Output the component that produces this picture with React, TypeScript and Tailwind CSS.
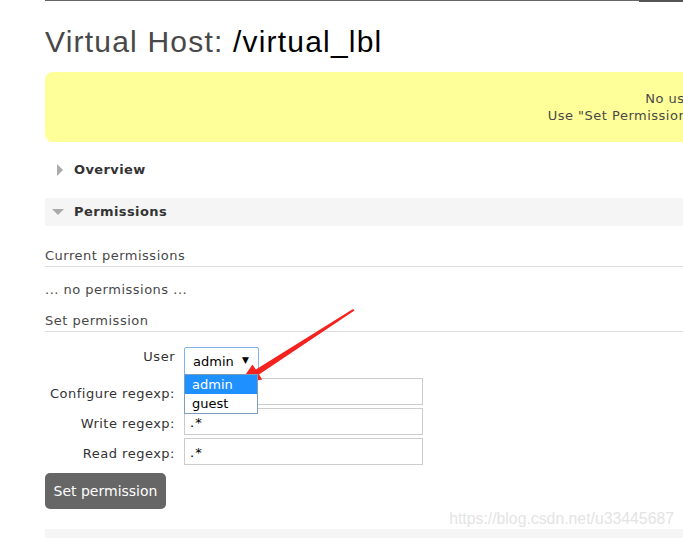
import React from "react";

const BODY = { fontFamily: '"DejaVu Sans", Verdana, sans-serif' };

function Field({ label, value }: { label: string; value: string }) {
  return (
    <>
      <div className="flex h-[27px] items-center justify-end pt-[4px] text-[13px] tracking-[0.5px] text-[#333]">{label}</div>
      <div className="h-[27px] w-[239px] border border-[#ccc] bg-white px-[5px] pt-[2px] text-[13px] leading-[23px] tracking-[1px] text-black">
        {value}
      </div>
    </>
  );
}

export default function App() {
  return (
    <div className="relative h-[538px] w-[683px] overflow-hidden bg-white" style={BODY}>
      {/* top rule */}
      <div className="flex h-[2px]">
        <div className="ml-[45px] h-px w-[594px] bg-[#666]" />
        <div className="h-[2px] flex-1 bg-[#555]" />
      </div>

      <div className="pl-[45px]">
        <h1
          className="mt-[21px] h-[38px] whitespace-nowrap text-[30px] leading-[38px] tracking-[1.2px] text-[#484848]"
          style={{ fontFamily: '"Liberation Sans", Arial, sans-serif' }}
        >
          Virtual Host: <span className="text-black">/virtual_lbl</span>
        </h1>

        {/* warning box */}
        <div className="mt-[11px] w-[1570px] rounded-[8px] bg-[#ffff99] py-[18px] text-center text-[13px] leading-[17px] tracking-[0.5px] text-[#484848]">
          <p>No users have permission to access this virtual host.</p>
          <p>Use "Set Permission" below to grant users permission to access this virtual host.</p>
        </div>

        {/* overview (collapsed) */}
        <div className="mt-[14px] flex h-[28px] items-center gap-[11px] pl-[12px]">
          <div className="h-0 w-0 border-y-[6px] border-l-[6px] border-y-transparent border-l-[#aaa]" />
          <span className="text-[13px] font-bold tracking-[0.4px] text-[#333]">Overview</span>
        </div>

        {/* permissions (expanded) */}
        <div className="mt-[14px] flex h-[28px] items-center gap-[10px] bg-[#f5f5f5] pl-[7px]">
          <div className="h-0 w-0 border-x-[6px] border-t-[6px] border-x-transparent border-t-[#aaa]" />
          <span className="text-[13px] font-bold tracking-[0.4px] text-[#333]">Permissions</span>
        </div>

        <h3 className="mt-[21px] border-b border-[#ddd] pb-[2px] text-[13px] leading-[17px] tracking-[0.5px] text-[#484848]">
          Current permissions
        </h3>
        <p className="mt-[14px] text-[13px] leading-[17px] tracking-[0.5px] text-[#484848]">... no permissions ...</p>

        <h3 className="mt-[14px] border-b border-[#ddd] pb-[2px] text-[13px] leading-[17px] tracking-[0.5px] text-[#484848]">
          Set permission
        </h3>

        <div className="mt-[15px] grid grid-cols-[130px_auto] gap-x-[9px] gap-y-[3px]">
          <div className="pt-[1px] text-right text-[13px] leading-[17px] tracking-[0.5px] text-[#333]">User</div>
          <div className="relative h-[28px] w-[75px]">
            <div className="flex h-[28px] w-[75px] items-center justify-between rounded-[2px] border border-[#7eb4ea] bg-white pl-[8px] pr-[9px] text-[13px] text-black">
              <span className="pt-[2px]">admin</span>
              <span className="text-[9px]">▼</span>
            </div>
            {/* open dropdown */}
            <div className="absolute left-0 top-[27px] z-10 w-[74px] border border-[#7f9db9] bg-white text-[13px] leading-[19px]">
              <div className="bg-[#1e90ff] pl-[7px] text-white">admin</div>
              <div className="pl-[7px] text-black">guest</div>
            </div>
          </div>
          <Field label="Configure regexp:" value="" />
          <Field label="Write regexp:" value=".*" />
          <Field label="Read regexp:" value=".*" />
        </div>

        <button className="mt-[8px] h-[36px] w-[121px] rounded-[5px] bg-[#666] text-[14px] text-white">
          Set permission
        </button>

        <div className="mt-[20px] h-[20px] bg-[#f5f5f5]" />
      </div>

      {/* watermark */}
      <div
        className="absolute right-[9px] top-[509px] text-[15.8px] leading-[20px] text-[#e4e4e4]"
        style={{ fontFamily: '"Liberation Sans", Arial, sans-serif' }}
      >
        https://blog.csdn.net/u33445687
      </div>

      {/* red annotation arrow */}
      <svg className="pointer-events-none absolute left-0 top-0" width="683" height="538">
        <polygon
          points="353,309 354.5,310.5 259,374.4 262.3,379.4 239,384 252.5,364.4 255.8,369.4"
          fill="#f5231f"
        />
      </svg>
    </div>
  );
}
